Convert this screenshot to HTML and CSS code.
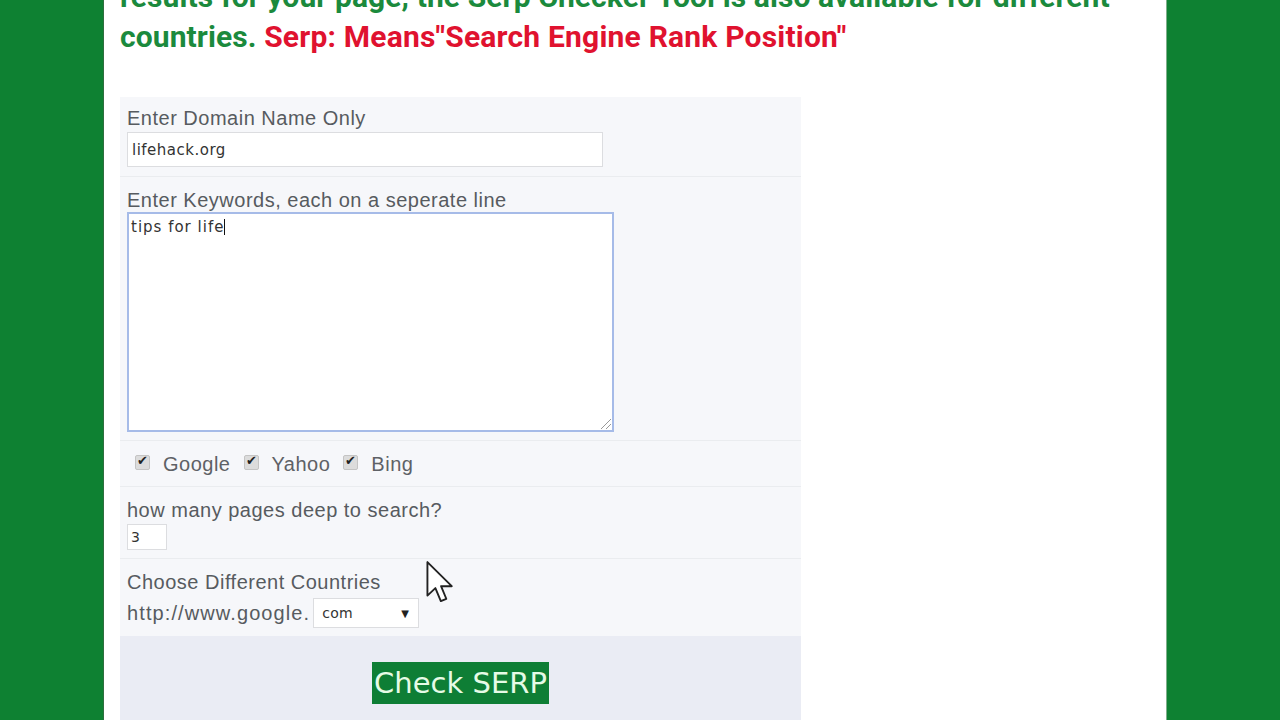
FILE: index.html
```html
<!DOCTYPE html>
<html lang="en">
<head>
    <meta charset="UTF-8">
    <meta name="viewport" content="width=device-width, initial-scale=1.0">
    <title>Serp Checker Tool</title>
    <link rel="stylesheet" href="styles.css">
</head>
<body>
    <div class="page">
        <h2 class="intro">results for your page, the Serp Checker Tool is also available for different countries. <span class="note">Serp: Means"Search Engine Rank Position"</span></h2>

        <form class="serp-form">
            <div class="row">
                <label class="lbl">Enter Domain Name Only</label>
                <input type="text" class="domain" value="lifehack.org">
            </div>

            <div class="row">
                <label class="lbl">Enter Keywords, each on a seperate line</label>
                <div class="keywords">tips for life<span class="caret"></span><span class="grip"></span></div>
            </div>

            <div class="row engines">
                <span class="check"></span>Google
                <span class="check"></span>Yahoo
                <span class="check"></span>Bing
            </div>

            <div class="row">
                <label class="lbl">how many pages deep to search?</label>
                <input type="text" class="depth" value="3">
            </div>

            <div class="row">
                <label class="lbl">Choose Different Countries</label>
                <div class="country">http://www.google.<span class="select">com<span class="arrow">&#9660;</span></span></div>
            </div>

            <div class="submit-area">
                <button type="button" class="check-btn">Check SERP</button>
            </div>
        </form>

        <!-- mouse pointer -->
        <svg class="pointer" width="30" height="44" viewBox="0 0 14 21">
            <path d="M1 1 L1 17 L4.8 13.4 L7.4 19.6 L10 18.5 L7.5 12.5 L12.6 12.5 Z" fill="#fff" stroke="#222" stroke-width="0.9" stroke-linejoin="round"/>
        </svg>
    </div>
</body>
</html>
```

FILE: styles.css
```css
body {
    margin: 0;
    background-color: #0e8132;
    font-family: 'Liberation Sans', Arial, sans-serif;
    overflow: hidden;
}
.page {
    position: relative;
    display: flow-root;
    width: 1062px;
    min-height: 720px;
    margin-left: 103px;
    background: #fff;
    border-left: 1px solid #2f6e3f;
    border-right: 1px solid #7fae8a;
}
.intro {
    margin: -23px 0 0 0;
    padding: 0 16px 0 16px;
    font-family: Roboto, 'Liberation Sans', sans-serif;
    font-size: 30px;
    line-height: 40px;
    letter-spacing: 0.1px;
    font-weight: bold;
    color: #1b8a3d;
}
.intro .note {
    color: #e0122f;
    letter-spacing: 0.2px;
}
.serp-form {
    width: 681px;
    margin: 40px 0 0 16px;
    background: #f6f7fa;
}
.row {
    padding: 10px 7px 9px 7px;
    border-bottom: 1px solid #eaecef;
}
.lbl {
    display: block;
    font-size: 20px;
    letter-spacing: 0.5px;
    line-height: 22px;
    color: #575b60;
}
.domain {
    display: block;
    box-sizing: border-box;
    width: 476px;
    height: 35px;
    margin-top: 3px;
    padding: 0 4px;
    border: 1px solid #dcdde0;
    background: #fff;
    font-family: 'DejaVu Sans', sans-serif;
    font-size: 15px;
    letter-spacing: 0.5px;
    color: #333;
}
.row:nth-child(2) {
    padding-top: 12px;
    padding-bottom: 8px;
}
.keywords {
    position: relative;
    box-sizing: border-box;
    width: 487px;
    height: 220px;
    margin-top: 1px;
    padding: 4px 2px;
    border: 2px solid #a6bbe8;
    background: #fff;
    font-family: 'DejaVu Sans', sans-serif;
    font-size: 15px;
    letter-spacing: 1px;
    color: #333;
}
.caret {
    display: inline-block;
    width: 1px;
    height: 16px;
    vertical-align: -3px;
    background: #111;
}
.grip {
    position: absolute;
    right: 1px;
    bottom: 1px;
    width: 10px;
    height: 10px;
    background: linear-gradient(135deg, transparent 45%, #999 46%, #999 54%, transparent 55%, transparent 70%, #999 71%, #999 79%, transparent 80%);
}
.engines {
    display: flex;
    align-items: center;
    height: 26px;
    padding: 10px 7px 9px 15px;
    font-size: 20px;
    letter-spacing: 0.5px;
    color: #5e6166;
}
.check {
    position: relative;
    display: inline-block;
    flex: none;
    width: 13px;
    height: 13px;
    margin: -4px 13px 0 0;
    background: #dcdcdc;
    border: 1px solid #c4c4c4;
    border-radius: 2px;
}
.check::after {
    content: "\2714";
    position: absolute;
    left: 1px;
    top: -3px;
    font-size: 13px;
    color: #222;
}
.engines .check:not(:first-child) {
    margin-left: 13px;
}
.row:nth-child(4) {
    padding-top: 12px;
    padding-bottom: 8px;
}
.depth {
    display: block;
    box-sizing: border-box;
    width: 40px;
    height: 26px;
    margin-top: 3px;
    padding: 0 3px;
    border: 1px solid #dcdde0;
    background: #fff;
    font-family: 'DejaVu Sans', sans-serif;
    font-size: 14px;
    color: #333;
}
.row:nth-child(5) {
    padding-top: 12px;
    padding-bottom: 8px;
    border-bottom: none;
}
.country {
    display: flex;
    align-items: center;
    margin-top: 5px;
    font-size: 20px;
    letter-spacing: 1.1px;
    color: #575b60;
}
.select {
    display: flex;
    align-items: center;
    justify-content: space-between;
    box-sizing: border-box;
    width: 106px;
    height: 30px;
    margin-left: 3px;
    padding: 0 9px 0 8px;
    border: 1px solid #dcdde0;
    background: #fff;
    font-family: 'DejaVu Sans', sans-serif;
    font-size: 14px;
    letter-spacing: 0.3px;
    color: #333;
}
.arrow {
    font-size: 10px;
    color: #222;
}
.submit-area {
    height: 90px;
    padding-top: 26px;
    background: #eaecf4;
    text-align: center;
}
.check-btn {
    height: 42px;
    padding: 0 2px;
    border: none;
    background: #0e7e35;
    font-family: 'DejaVu Sans', sans-serif;
    font-size: 29px;
    line-height: 42px;
    color: #e6fbe6;
}
.pointer {
    position: absolute;
    left: 321px;
    top: 560px;
}
```
